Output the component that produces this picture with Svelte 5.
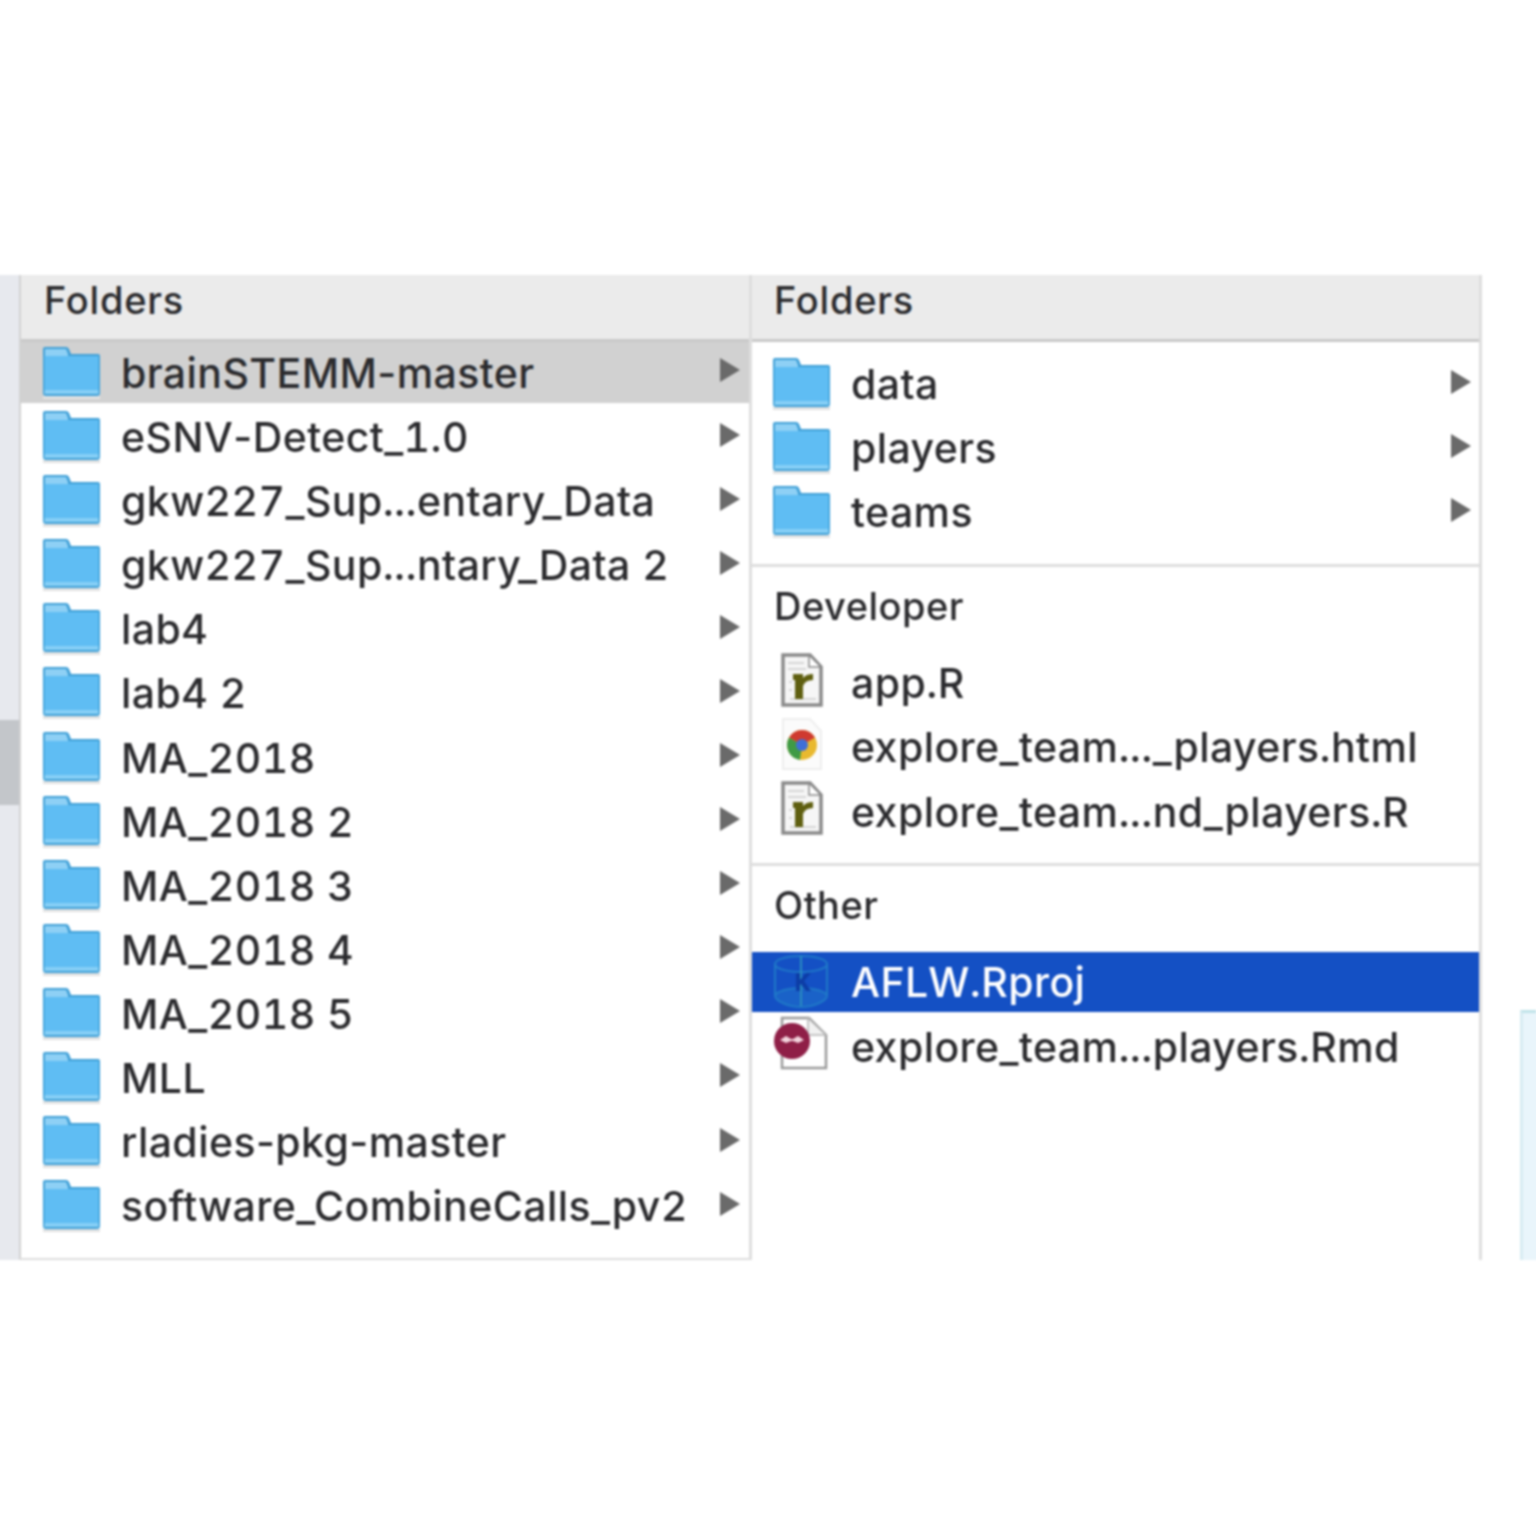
<script>
  const leftFolders = [
    "brainSTEMM-master", "eSNV-Detect_1.0", "gkw227_Sup...entary_Data", "gkw227_Sup...ntary_Data 2",
    "lab4", "lab4 2", "MA_2018", "MA_2018 2", "MA_2018 3", "MA_2018 4", "MA_2018 5", "MLL",
    "rladies-pkg-master", "software_CombineCalls_pv2"
  ];
  const rightFolders = ["data", "players", "teams"];
</script>

{#snippet folder()}
  <svg class="icon" width="58" height="52" viewBox="0 0 58 52">
    <rect x="0" y="49" width="57" height="3" fill="#e2e2e2" />
    <path d="M0 2q0-2 2-2h21q2 0 3 2l2 5h27q2 0 2 2v37q0 3-3 3H3q-3 0-3-3z" fill="#3f9fd6" />
    <path d="M2 2h21l2 5v2H2z" fill="#8ed0f5" />
    <rect x="1.500" y="9" width="54" height="34" fill="#5fbdf3" />
    <rect x="1.500" y="43" width="54" height="4" fill="#86cff6" />
  </svg>
{/snippet}

{#snippet arrow()}
  <svg class="arrow" width="22" height="26" viewBox="0 0 22 26">
    <path d="M1 1l20 12L1 25z" fill="#6a6a6a" />
  </svg>
{/snippet}

{#snippet rDoc()}
  <svg class="icon file" width="44" height="56" viewBox="0 0 44 56">
    <path d="M3 3h27l11 12v38H3z" fill="#f6f6f6" stroke="#8a8a8a" stroke-width="3.500" />
    <path d="M29 3v12h12z" fill="#fff" stroke="#8a8a8a" stroke-width="1.500" />
    <g stroke="#d5d5d5" stroke-width="2">
      <path d="M8 11h16M8 17h18M9 30h3M9 38h3M10 47h26" />
    </g>
    <path d="M13 22h10v4q3-4 10-4v6q-8 0-10 6v13h-8V28h-2z" fill="#5f5f10" />
  </svg>
{/snippet}

<!-- tabular digits in Inter also widen the hyphen, so hyphens opt out -->
{#snippet label(text)}
  <span class="name">
    {#each text.split(/(-)/) as part}{#if part === "-"}<span class="hyphen">-</span>{:else}{part}{/if}{/each}
  </span>
{/snippet}

<div class="page">
  <div class="finder">
    <div class="strip"><div class="thumb"></div></div>

    <section class="col left">
      <h2 class="head">Folders</h2>
      <ul class="list">
        {#each leftFolders as name, i}
          <li class="row" class:current={i === 0}>
            {@render folder()}
            {@render label(name)}
            {@render arrow()}
          </li>
        {/each}
      </ul>
    </section>

    <section class="col right">
      <h2 class="head">Folders</h2>
      <ul class="list folders">
        {#each rightFolders as name}
          <li class="row">
            {@render folder()}
            {@render label(name)}
            {@render arrow()}
          </li>
        {/each}
      </ul>

      <div class="group developer">
        <h3>Developer</h3>
        <ul class="list">
          <li class="row">
            {@render rDoc()}
            {@render label("app.R")}
          </li>
          <li class="row">
            <svg class="icon file" width="44" height="56" viewBox="0 0 44 56">
              <path d="M3 3h27l11 12v38H3z" fill="#fbfbfb" stroke="#eeeeee" stroke-width="2" />
              <circle cx="22" cy="29" r="15" fill="#e9b92f" />
              <path d="M22 29L9 21.500A15 15 0 0 1 35 21.500z" fill="#cf3a30" />
              <path d="M22 29L9 21.500A15 15 0 0 0 20 43.900z" fill="#3f9a45" />
              <circle cx="22" cy="29" r="6" fill="#3f6fd8" />
            </svg>
            {@render label("explore_team..._players.html")}
          </li>
          <li class="row">
            {@render rDoc()}
            {@render label("explore_team...nd_players.R")}
          </li>
        </ul>
      </div>

      <div class="group other">
        <h3>Other</h3>
        <ul class="list">
          <li class="row selected">
            <svg class="icon wide rproj" width="56" height="56" viewBox="0 0 56 56">
              <g fill="none" stroke="#1f78c8" stroke-width="2">
                <ellipse cx="28" cy="11" rx="26" ry="8" />
                <path d="M2 11v32M54 11v32" />
                <path d="M2 43c0 4 12 11 26 11s26-7 26-11c0-4-12-8-26-8S2 39 2 43z" fill="#1a62c8" />
                <path d="M28 3v50" stroke="#2a8bc0" />
              </g>
              <path d="M23 20h4v7l6-7h5l-7 8 7 10h-5l-5-7-1 1v6h-4z" fill="#0d3da6" />
            </svg>
            {@render label("AFLW.Rproj")}
          </li>
          <li class="row">
            <svg class="icon wide rmd" width="56" height="56" viewBox="0 0 56 56">
              <path d="M9 3h27l17 17v33H9z" fill="#fff" stroke="#9a9a9a" stroke-width="2.500" />
              <path d="M35 3v17h18z" fill="#f1f1f1" stroke="#b5b5b5" stroke-width="1.500" />
              <circle cx="19" cy="26" r="18" fill="#8f1f47" />
              <path d="M7 25l6-4 5 3h2l5-3 6 4-6 3-5-2h-2l-5 2z" fill="#f3d5de" />
            </svg>
            {@render label("explore_team...players.Rmd")}
          </li>
        </ul>
      </div>
    </section>

    <div class="ghost"></div>
  </div>
</div>

<style>
  :global(body) {
    margin: 0;
    background: #fff;
  }

  .page {
    width: 1536px;
    height: 1536px;
    padding-top: 275px;
    box-sizing: border-box;
    overflow: hidden;
    font-family: "Inter", "Liberation Sans", sans-serif;
    color: #2b2b2e;
  }

  .finder {
    display: flex;
    height: 985px;
    filter: blur(0.9px);
  }

  .strip {
    width: 19px;
    padding-top: 445px;
    background: #e7e9ee;
    box-shadow: -6px 0 0 #e7e9ee;
    box-sizing: border-box;
  }

  .thumb {
    height: 85px;
    background: #c3c6ca;
    box-shadow: -6px 0 0 #c3c6ca;
  }

  .col {
    display: flex;
    flex-direction: column;
    box-sizing: content-box;
    border-right: 3px solid #dedede;
  }

  .left {
    width: 728px;
    border-left: 2px solid #d2d2d2;
    border-bottom: 2px solid #dedede;
  }

  .right {
    width: 727px;
  }

  .head {
    margin: 0;
    height: 64px;
    padding-left: 23px;
    line-height: 50px;
    font-size: 38px;
    font-weight: 450;
    letter-spacing: 0.800px;
    color: #2b2b2e;
    background: #ebebeb;
    border-bottom: 3px solid #c9c9c9;
  }

  .right .head {
    padding-left: 22px;
  }

  .list {
    margin: 0;
    padding: 0;
    list-style: none;
  }

  .row {
    display: flex;
    align-items: center;
    height: 64.100px;
    padding-left: 22px;
    padding-right: 8px;
    box-sizing: border-box;
  }

  .right .row {
    padding-left: 21px;
    padding-right: 7px;
  }

  .icon {
    flex: none;
    margin-right: 20px;
  }

  .file {
    margin-left: 7px;
    margin-right: 27px;
    margin-top: -7px;
  }

  .wide {
    margin-right: 22px;
  }

  .rproj {
    margin-top: -2px;
  }

  .rmd {
    margin-top: -8px;
  }

  .name {
    flex: 1;
    font-size: 41px;
    font-weight: 450;
    font-variant-numeric: tabular-nums;
    letter-spacing: 0.420px;
    white-space: nowrap;
  }

  .hyphen {
    font-variant-numeric: normal;
  }

  .arrow {
    flex: none;
    margin-top: -5px;
  }

  .current {
    height: 61px;
    margin-bottom: 2px;
    background: #d1d1d1;
  }

  .folders {
    padding-top: 10px;
    padding-bottom: 20px;
  }

  .group {
    border-top: 3px solid #dedede;
  }

  .group h3 {
    margin: 0;
    padding-left: 22px;
    font-size: 38px;
    font-weight: 450;
    letter-spacing: 0.500px;
    line-height: 78px;
    color: #2b2b2e;
  }

  .developer {
    height: 296px;
  }

  .developer h3 {
    padding-bottom: 6px;
  }

  .other h3 {
    padding-bottom: 8px;
  }

  .selected {
    height: 60px;
    margin-bottom: 3px;
    color: #fff;
    background: #1450c4;
  }

  .ghost {
    width: 16px;
    height: 250px;
    margin-top: 735px;
    margin-left: auto;
    background: #e9f5fb;
    border-left: 3px solid #d8ecf2;
    border-top: 3px solid #c0e3e9;
    box-shadow: 6px 0 0 #e9f5fb;
    box-sizing: border-box;
  }
</style>
